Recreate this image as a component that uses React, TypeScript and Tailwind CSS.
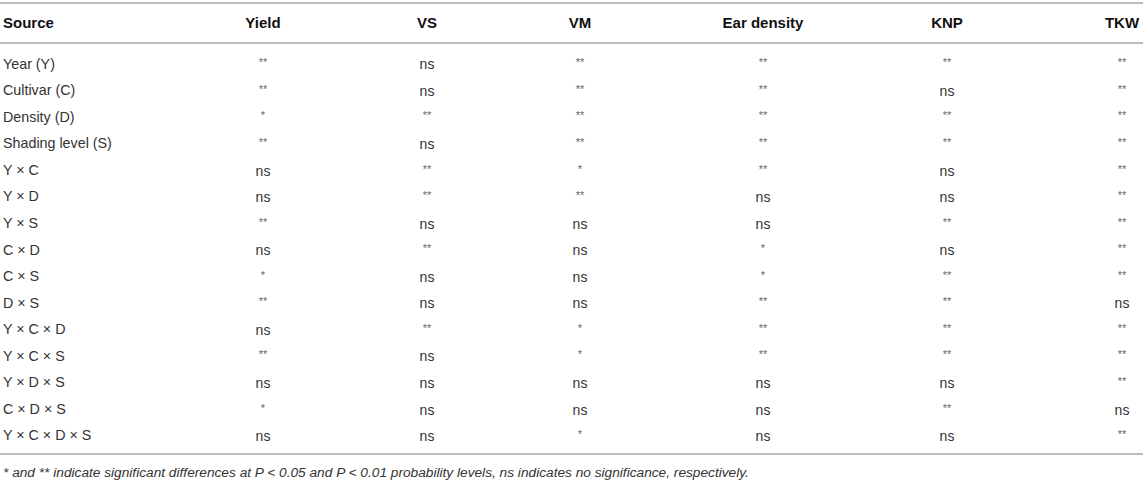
const columns = ['Yield', 'VS', 'VM', 'Ear density', 'KNP', 'TKW'];

const rows: [string, string[]][] = [
  ['Year (Y)', ['**', 'ns', '**', '**', '**', '**']],
  ['Cultivar (C)', ['**', 'ns', '**', '**', 'ns', '**']],
  ['Density (D)', ['*', '**', '**', '**', '**', '**']],
  ['Shading level (S)', ['**', 'ns', '**', '**', '**', '**']],
  ['Y × C', ['ns', '**', '*', '**', 'ns', '**']],
  ['Y × D', ['ns', '**', '**', 'ns', 'ns', '**']],
  ['Y × S', ['**', 'ns', 'ns', 'ns', '**', '**']],
  ['C × D', ['ns', '**', 'ns', '*', 'ns', '**']],
  ['C × S', ['*', 'ns', 'ns', '*', '**', '**']],
  ['D × S', ['**', 'ns', 'ns', '**', '**', 'ns']],
  ['Y × C × D', ['ns', '**', '*', '**', '**', '**']],
  ['Y × C × S', ['**', 'ns', '*', '**', '**', '**']],
  ['Y × D × S', ['ns', 'ns', 'ns', 'ns', 'ns', '**']],
  ['C × D × S', ['*', 'ns', 'ns', 'ns', '**', 'ns']],
  ['Y × C × D × S', ['ns', 'ns', '*', 'ns', 'ns', '**']],
];

const grid = 'grid grid-cols-[188px_150px_178px_128px_238px_130px_1fr] items-center';

function Cell({ value, last }: { value: string; last: boolean }) {
  const stars = value.includes('*');
  const inner = (
    <span className={stars ? 'text-[11px] text-[#666] relative -top-[3px]' : 'text-[14px] text-[#333]'}>{value}</span>
  );
  if (last) {
    return (
      <div className="flex justify-end">
        <div className="w-[42px] text-center">{inner}</div>
      </div>
    );
  }
  return <div className="text-center">{inner}</div>;
}

export default function App() {
  return (
    <div className="w-[1143px] h-[484px] bg-white pt-[2px] font-['Liberation_Sans',Arial,sans-serif] text-[#333]">
      <div className="h-[2px] bg-[#bdbdbd]" />
      <div className={`${grid} h-[38px] text-[15px] font-bold text-[#111]`}>
        <div className="pl-[3px]">Source</div>
        {columns.map((c, i) =>
          i === columns.length - 1 ? (
            <div key={c} className="flex justify-end">
              <div className="w-[42px] text-center">{c}</div>
            </div>
          ) : (
            <div key={c} className="text-center">{c}</div>
          )
        )}
      </div>
      <div className="h-[2px] bg-[#bdbdbd]" />
      <div className="pt-[7px]">
        {rows.map(([name, vals]) => (
          <div key={name} className={`${grid} h-[26.57px]`}>
            <div className="pl-[3px] text-[14.3px] text-[#333]">{name}</div>
            {vals.map((v, i) => (
              <Cell key={i} value={v} last={i === vals.length - 1} />
            ))}
          </div>
        ))}
      </div>
      <div className="mt-[4px] h-[2px] bg-[#bdbdbd]" />
      <p className="pl-[3px] pt-[8px] text-[13.7px] italic text-[#333]">
        * and ** indicate significant differences at P &lt; 0.05 and P &lt; 0.01 probability levels, ns indicates no significance, respectively.
      </p>
    </div>
  );
}
